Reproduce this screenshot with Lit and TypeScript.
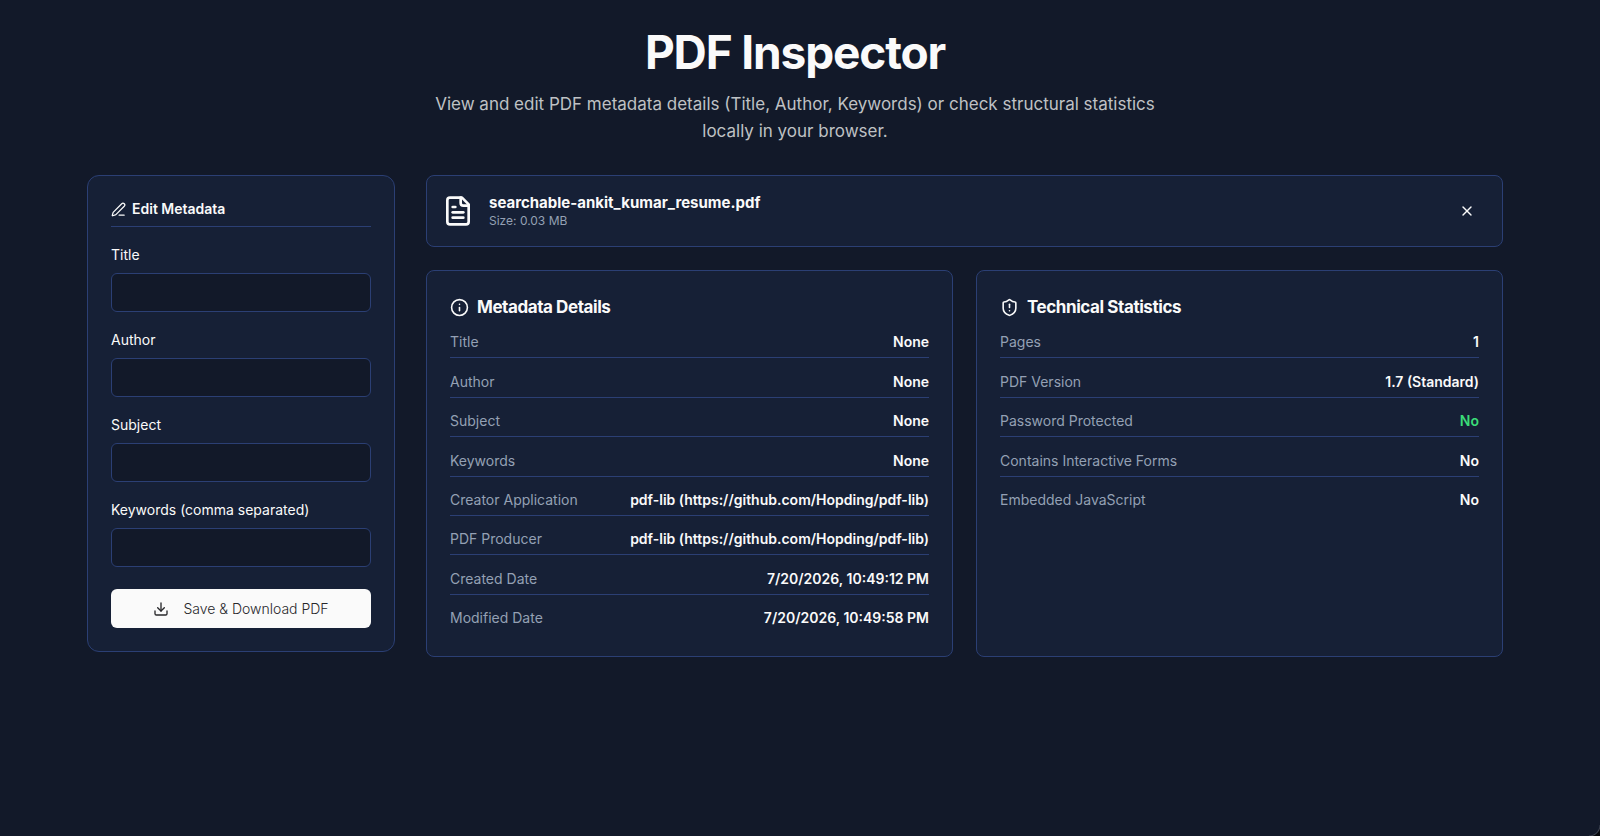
import { LitElement, html, css, svg, nothing } from "lit";
import { customElement, property } from "lit/decorators.js";

type Row = { label: string; value: string; good?: boolean };

const metadata: Row[] = [
  { label: "Title", value: "None" },
  { label: "Author", value: "None" },
  { label: "Subject", value: "None" },
  { label: "Keywords", value: "None" },
  { label: "Creator Application", value: "pdf-lib (https://github.com/Hopding/pdf-lib)" },
  { label: "PDF Producer", value: "pdf-lib (https://github.com/Hopding/pdf-lib)" },
  { label: "Created Date", value: "7/20/2026, 10:49:12 PM" },
  { label: "Modified Date", value: "7/20/2026, 10:49:58 PM" },
];

const statistics: Row[] = [
  { label: "Pages", value: "1" },
  { label: "PDF Version", value: "1.7 (Standard)" },
  { label: "Password Protected", value: "No", good: true },
  { label: "Contains Interactive Forms", value: "No" },
  { label: "Embedded JavaScript", value: "No" },
];

const fields = [
  { id: "title", label: "Title" },
  { id: "author", label: "Author" },
  { id: "subject", label: "Subject" },
  { id: "keywords", label: "Keywords (comma separated)" },
];

const shapes = {
  pen: svg`<path d="M13 21h8"/><path d="M21.174 6.812a1 1 0 0 0-3.986-3.987L3.842 16.174a2 2 0 0 0-.5.83l-1.321 4.352a.5.5 0 0 0 .623.622l4.353-1.32a2 2 0 0 0 .83-.497z"/>`,
  file: svg`<path d="M15 2H6a2 2 0 0 0-2 2v16a2 2 0 0 0 2 2h12a2 2 0 0 0 2-2V7Z"/><path d="M14 2v4a2 2 0 0 0 2 2h4"/><path d="M10 9H8"/><path d="M16 13H8"/><path d="M16 17H8"/>`,
  info: svg`<circle cx="12" cy="12" r="10"/><path d="M12 16v-4"/><path d="M12 8h.01"/>`,
  shield: svg`<path d="M20 13c0 5-3.5 7.5-7.66 8.95a1 1 0 0 1-.67-.01C7.5 20.5 4 18 4 13V6a1 1 0 0 1 1-1c2 0 4.5-1.2 6.24-2.72a1.17 1.17 0 0 1 1.52 0C14.51 3.81 17 5 19 5a1 1 0 0 1 1 1z"/><path d="M12 8v4"/><path d="M12 16h.01"/>`,
  close: svg`<path d="M18 6 6 18"/><path d="m6 6 12 12"/>`,
  download: svg`<path d="M12 15V3"/><path d="M21 15v4a2 2 0 0 1-2 2H5a2 2 0 0 1-2-2v-4"/><path d="m7 10 5 5 5-5"/>`,
};

const icon = (name: keyof typeof shapes, size: number) => html`<svg
  width=${size} height=${size} viewBox="0 0 24 24" fill="none" stroke="currentColor"
  stroke-width="2" stroke-linecap="round" stroke-linejoin="round" aria-hidden="true"
>${shapes[name]}</svg>`;

@customElement("detail-panel")
class DetailPanel extends LitElement {
  @property() heading = "";
  @property() icon: keyof typeof shapes = "info";
  @property({ attribute: false }) rows: Row[] = [];

  static styles = css`
    :host {
      display: flex;
      flex-direction: column;
      box-sizing: border-box;
      min-height: 387px;
      padding: 24px 23px 22px;
      border: 1px solid #2b3f74;
      border-radius: 8px;
      background: #162036;
    }
    h2 {
      display: flex;
      align-items: center;
      gap: 8px;
      margin: 0;
      font-size: 17px;
      line-height: 24px;
      font-weight: 700;
      letter-spacing: -0.025em;
    }
    .rows {
      flex: 1;
      display: grid;
      grid-template-rows: repeat(8, minmax(0, 1fr));
      margin: 0;
    }
    .row {
      display: flex;
      justify-content: space-between;
      align-items: flex-end;
      gap: 16px;
      padding-bottom: 5px;
      border-bottom: 1px solid #2b3f74;
      font-size: 14px;
      line-height: 20px;
    }
    .row:last-child {
      border-bottom-color: transparent;
    }
    dt {
      color: #94a0b4;
    }
    dd {
      margin: 0;
      font-weight: 600;
    }
    .good {
      color: #3bdc78;
    }
  `;

  render() {
    return html`
      <h2>${icon(this.icon, 19)}${this.heading}</h2>
      <dl class="rows">
        ${this.rows.map(
          (r) => html`<div class="row">
            <dt>${r.label}</dt>
            <dd class=${r.good ? "good" : nothing}>${r.value}</dd>
          </div>`
        )}
      </dl>
    `;
  }
}

@customElement("app-root")
class AppRoot extends LitElement {
  static styles = css`
    :host {
      display: block;
      box-sizing: border-box;
      min-height: 100vh;
      padding: 24px 97px 24px 87px;
      background:
        radial-gradient(circle at 0 0, transparent 10px, #3c4250 11px, #05070b 12px) right bottom /
          11px 11px no-repeat,
        #121929;
      color: #fafafa;
      font-family: Inter, "Liberation Sans", sans-serif;
    }
    header {
      display: flex;
      flex-direction: column;
      align-items: center;
      gap: 11px;
      text-align: center;
    }
    h1 {
      margin: 0;
      font-size: 46px;
      line-height: 56px;
      font-weight: 700;
      letter-spacing: -0.025em;
    }
    .lead {
      max-width: 740px;
      margin: 0;
      color: #bfc1c4;
      font-size: 17px;
      line-height: 27px;
    }
    .layout {
      display: grid;
      grid-template-columns: 308px minmax(0, 1fr);
      align-items: start;
      gap: 31px;
      margin-top: 30px;
    }
    .card {
      box-sizing: border-box;
      border: 1px solid #2b3f74;
      border-radius: 8px;
      background: #162036;
    }
    .editor {
      display: flex;
      flex-direction: column;
      gap: 18px;
      padding: 23px;
      border-radius: 12px;
    }
    .editor h2 {
      display: flex;
      align-items: center;
      gap: 6px;
      margin: 0;
      padding-bottom: 7px;
      border-bottom: 1px solid #2b3f74;
      font-size: 14px;
      line-height: 20px;
      font-weight: 600;
    }
    .field {
      display: flex;
      flex-direction: column;
      gap: 8px;
    }
    label {
      font-size: 14px;
      line-height: 20px;
    }
    input {
      box-sizing: border-box;
      width: 100%;
      height: 39px;
      padding: 0 12px;
      border: 1px solid #2b3f74;
      border-radius: 6px;
      background: #121929;
      color: inherit;
      font: inherit;
      font-size: 14px;
    }
    button {
      display: flex;
      align-items: center;
      justify-content: center;
      border: 0;
      font: inherit;
      cursor: pointer;
    }
    .save {
      height: 39px;
      gap: 14px;
      margin-top: 4px;
      border-radius: 6px;
      background: #fafafa;
      color: #27272a;
      font-size: 14px;
      font-weight: 300;
    }
    .main {
      display: grid;
      gap: 23px;
    }
    .file {
      display: flex;
      align-items: center;
      gap: 15px;
      min-height: 72px;
      padding: 0 16px 0 15px;
    }
    .about {
      flex: 1;
    }
    .name,
    .size {
      margin: 0;
    }
    .name {
      font-size: 15px;
      line-height: 20px;
      font-weight: 700;
    }
    .size {
      color: #94a0b4;
      font-size: 12px;
      line-height: 16px;
    }
    .close {
      width: 39px;
      height: 39px;
      padding: 0;
      border-radius: 6px;
      background: transparent;
      color: #fafafa;
    }
    .panels {
      display: grid;
      grid-template-columns: repeat(2, minmax(0, 1fr));
      gap: 23px;
    }
  `;

  render() {
    return html`
      <header>
        <h1>PDF Inspector</h1>
        <p class="lead">
          View and edit PDF metadata details (Title, Author, Keywords) or check structural
          statistics locally in your browser.
        </p>
      </header>
      <div class="layout">
        <form class="card editor" @submit=${(e: Event) => e.preventDefault()}>
          <h2>${icon("pen", 15)}Edit Metadata</h2>
          ${fields.map(
            (f) => html`<div class="field">
              <label for=${f.id}>${f.label}</label>
              <input id=${f.id} type="text" />
            </div>`
          )}
          <button class="save" type="submit">${icon("download", 16)}Save &amp; Download PDF</button>
        </form>
        <div class="main">
          <section class="card file">
            ${icon("file", 32)}
            <div class="about">
              <p class="name">searchable-ankit_kumar_resume.pdf</p>
              <p class="size">Size: 0.03 MB</p>
            </div>
            <button class="close" type="button" aria-label="Remove file">${icon("close", 16)}</button>
          </section>
          <div class="panels">
            <detail-panel heading="Metadata Details" icon="info" .rows=${metadata}></detail-panel>
            <detail-panel heading="Technical Statistics" icon="shield" .rows=${statistics}></detail-panel>
          </div>
        </div>
      </div>
    `;
  }
}
